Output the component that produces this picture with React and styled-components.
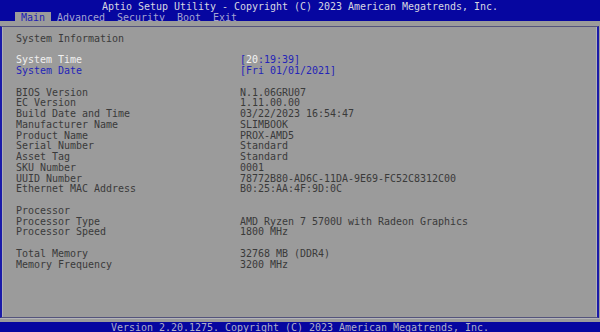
import React from "react";
import styled, { createGlobalStyle } from "styled-components";

const BLUE = "#0606a0";
const GRAY = "#9b9b9b";

const Global = createGlobalStyle`
  html, body { margin: 0; padding: 0; background: ${GRAY}; overflow: hidden; }
  * { box-sizing: border-box; }
`;

const Screen = styled.div`
  width: 600px;
  height: 332px;
  display: flex;
  flex-direction: column;
  background: ${GRAY};
  font-family: "DejaVu Sans Mono", "Liberation Mono", monospace;
  font-size: 9.97px;
  white-space: pre;
  overflow: hidden;
`;

const Header = styled.header`
  height: 21px;
  background: ${BLUE};
  display: flex;
  flex-direction: column;
`;

const Title = styled.div`
  height: 12px;
  padding-top: 1px;
  line-height: 12px;
  text-align: center;
  color: #d6d6e0;
`;

const TabRow = styled.nav`
  height: 9px;
  display: flex;
  padding-left: 15px;
`;

const Tab = styled.div`
  height: 9px;
  line-height: 11px;
  padding: 0 6px;
  background: ${(p) => (p.$active ? GRAY : "transparent")};
  color: ${(p) => (p.$active ? "#1c1cb4" : "#a4a4d2")};
`;

const Strip = styled.div`
  height: ${(p) => p.$h}px;
  background: ${GRAY};
  border-top: ${(p) => (p.$light ? "1px solid #b4b4b8" : "none")};
`;

const Panel = styled.main`
  height: 292px;
  margin-right: 1px;
  border-top: 1px solid #54547c;
  border-bottom: 1px solid #54547c;
  border-left: 2px solid #1a1aa8;
  border-right: 2px solid #1a1aa8;
  box-shadow: inset 1px 0 0 #b0b0b8, inset -1px 0 0 #b0b0b8;
  padding: 6.8px 0 0 14px;
  display: grid;
  grid-template-columns: 224px 1fr;
  grid-auto-rows: 10.76px;
  align-content: start;
  color: #3a3a3a;
`;

const Cell = styled.div`
  line-height: 10.76px;
  height: 10.76px;
  color: ${(p) => p.$color || "inherit"};
`;

const Hi = styled.span`
  color: #f4f4f4;
`;

const Footer = styled.footer`
  height: 10px;
  background: ${BLUE};
  color: #aeaec8;
  text-align: center;
  line-height: 11px;
  overflow: hidden;
`;

const rows = [
  ["System Information", ""],
  ["", ""],
  ["__time", ""],
  ["__date", ""],
  ["", ""],
  ["BIOS Version", "N.1.06GRU07"],
  ["EC Version", "1.11.00.00"],
  ["Build Date and Time", "03/22/2023 16:54:47"],
  ["Manufacturer Name", "SLIMBOOK"],
  ["Product Name", "PROX-AMD5"],
  ["Serial Number", "Standard"],
  ["Asset Tag", "Standard"],
  ["SKU Number", "0001"],
  ["UUID Number", "78772B80-AD6C-11DA-9E69-FC52C8312C00"],
  ["Ethernet MAC Address", "B0:25:AA:4F:9D:0C"],
  ["", ""],
  ["Processor", ""],
  ["Processor Type", "AMD Ryzen 7 5700U with Radeon Graphics"],
  ["Processor Speed", "1800 MHz"],
  ["", ""],
  ["Total Memory", "32768 MB (DDR4)"],
  ["Memory Frequency", "3200 MHz"],
];

const SEL = "#2424b8";

export default function App() {
  return (
    <Screen>
      <Global />
      <Header>
        <Title>Aptio Setup Utility - Copyright (C) 2023 American Megatrends, Inc.</Title>
        <TabRow>
          <Tab $active>Main</Tab>
          <Tab>Advanced</Tab>
          <Tab>Security</Tab>
          <Tab>Boot</Tab>
          <Tab>Exit</Tab>
        </TabRow>
      </Header>
      <Strip $h={5} />
      <Panel>
        {rows.map(([label, value], i) => {
          if (label === "__time") {
            return (
              <React.Fragment key={i}>
                <Cell $color="#f0f0f0">System Time</Cell>
                <Cell $color={SEL}>
                  [<Hi>20</Hi>:19:39]
                </Cell>
              </React.Fragment>
            );
          }
          if (label === "__date") {
            return (
              <React.Fragment key={i}>
                <Cell $color={SEL}>System Date</Cell>
                <Cell $color={SEL}>[Fri 01/01/2021]</Cell>
              </React.Fragment>
            );
          }
          return (
            <React.Fragment key={i}>
              <Cell>{label}</Cell>
              <Cell>{value}</Cell>
            </React.Fragment>
          );
        })}
      </Panel>
      <Strip $h={4} $light />
      <Footer>Version 2.20.1275. Copyright (C) 2023 American Megatrends, Inc.</Footer>
    </Screen>
  );
}
